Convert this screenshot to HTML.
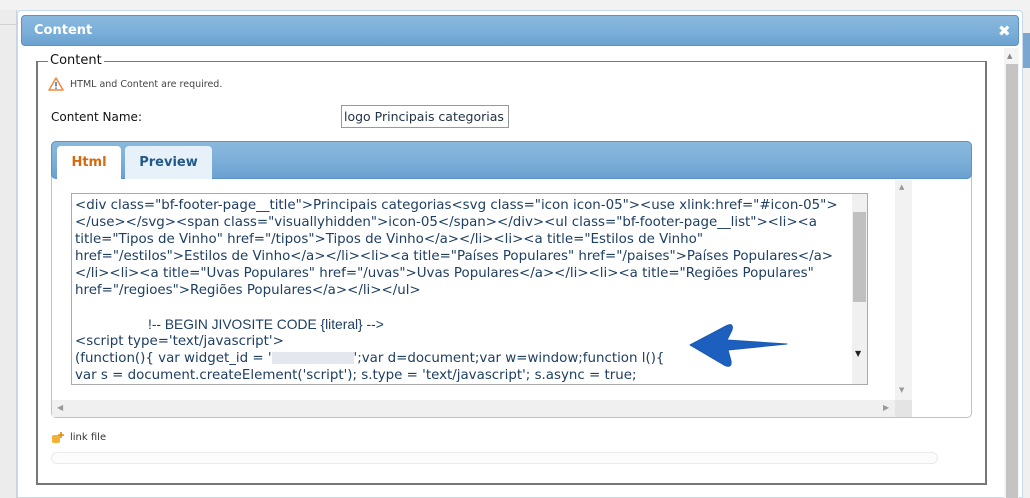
<!DOCTYPE html>
<html><head><meta charset="utf-8"><style>
*{box-sizing:border-box;margin:0;padding:0}
body{width:1030px;height:498px;overflow:hidden;background:#f2f2f2;font-family:"DejaVu Sans","Liberation Sans",sans-serif;position:relative}
.abs{position:absolute}
</style></head><body>
<div class="abs" style="left:0;top:10px;width:17px;height:488px;background:#ececec;border-right:1px solid #c8d4e0"></div>
<div class="abs" style="left:0;top:24px;width:17px;height:1px;background:#d0d0d0"></div>
<div class="abs" style="left:1019px;top:10px;width:11px;height:488px;background:#f0f0f0"></div>
<div class="abs" style="left:1022px;top:33px;width:8px;height:35px;background:#7aa6d0"></div>
<!-- dialog -->
<div class="abs" style="left:17px;top:10px;width:1006px;height:488px;background:#fff;border:1px solid #c6daee;border-radius:4px 4px 0 0"></div>
<div class="abs" style="left:21px;top:15px;width:998px;height:31px;border-radius:4px;border:1px solid #5b93c8;background:linear-gradient(#8ab8dd,#7aaed8 60%,#6ba1d0)"></div>
<div class="abs" style="left:34px;top:23px;color:#fff;font-weight:bold;font-size:13px;font-family:'DejaVu Sans',sans-serif">Content</div>
<div class="abs" style="left:998px;top:22px;color:#fff;font-weight:bold;font-size:15px">✖</div>
<!-- dialog scrollbar -->
<div class="abs" style="left:1004px;top:48px;width:15px;height:450px;background:#f4f4f4"></div>
<div class="abs" style="left:1006px;top:64px;width:12px;height:434px;background:#c4c4c4"></div>
<div class="abs" style="left:1007px;top:52px;font-size:7px;color:#888">▲</div>
<!-- fieldset -->
<div class="abs" style="left:36px;top:61px;width:951px;height:424px;border:2px solid #777;border-top-width:1px"></div>
<div class="abs" style="left:48px;top:53px;background:#fff;padding:0 2px;font-size:13px;color:#111">Content</div>
<svg class="abs" style="left:48px;top:77px" width="16" height="14" viewBox="0 0 16 14"><path d="M8 1 L15 13 H1 Z" fill="#fff" stroke="#f08a3c" stroke-width="1.5" stroke-linejoin="round"/><rect x="7.3" y="5" width="1.4" height="4.5" fill="#3a5fa0"/><rect x="7.3" y="10.5" width="1.4" height="1.4" fill="#3a5fa0"/></svg>
<div class="abs" style="left:70px;top:79px;font-size:9.5px;color:#444">HTML and Content are required.</div>
<div class="abs" style="left:51px;top:110px;font-size:12px;color:#111">Content Name:</div>
<div class="abs" style="left:341px;top:105px;width:168px;height:23px;border:1px solid #999;font-size:12.5px;color:#234;padding:3px 0 0 2px;white-space:nowrap">logo Principais categorias</div>
<!-- tabs container -->
<div class="abs" style="left:51px;top:141px;width:921px;height:277px;border:1px solid #a9c6e2;border-radius:5px;background:#fff"></div>
<div class="abs" style="left:51px;top:141px;width:921px;height:38px;border:1px solid #5b93c8;border-radius:5px;background:linear-gradient(#8ab8dd,#7aaed8 60%,#6aa0d0)"></div>
<div class="abs" style="left:57px;top:146px;width:64px;height:33px;background:#fff;border-radius:4px 4px 0 0;color:#d46a10;font-weight:bold;font-size:13px;text-align:center;padding-top:9px">Html</div>
<div class="abs" style="left:125px;top:146px;width:87px;height:33px;background:#e6f1fa;border-radius:4px 4px 0 0;color:#245888;font-weight:bold;font-size:13px;text-align:center;padding-top:9px">Preview</div>
<!-- outer scrollbars -->
<div class="abs" style="left:895px;top:180px;width:17px;height:220px;background:#f2f2f2"></div>
<div class="abs" style="left:899px;top:183px;font-size:7px;color:#999">▲</div>
<div class="abs" style="left:899px;top:386px;font-size:7px;color:#999">▼</div>
<div class="abs" style="left:52px;top:400px;width:843px;height:17px;background:#f0f0f0"></div>
<div class="abs" style="left:895px;top:400px;width:17px;height:17px;background:#e4e4e4"></div>
<div class="abs" style="left:57px;top:403px;font-size:8px;color:#999">◀</div>
<div class="abs" style="left:883px;top:403px;font-size:8px;color:#999">▶</div>
<!-- textarea -->
<div class="abs" style="left:71px;top:193px;width:797px;height:192px;border:1px solid #aaa;background:#fff;overflow:hidden">
<div style="padding:3px 0 0 3px;font-size:13.4px;line-height:17px;color:#1e3e62;white-space:nowrap">
<div>&lt;div class="bf-footer-page__title"&gt;Principais categorias&lt;svg class="icon icon-05"&gt;&lt;use xlink:href="#icon-05"&gt;</div>
<div>&lt;/use&gt;&lt;/svg&gt;&lt;span class="visuallyhidden"&gt;icon-05&lt;/span&gt;&lt;/div&gt;&lt;ul class="bf-footer-page__list"&gt;&lt;li&gt;&lt;a</div>
<div>title="Tipos de Vinho" href="/tipos"&gt;Tipos de Vinho&lt;/a&gt;&lt;/li&gt;&lt;li&gt;&lt;a title="Estilos de Vinho"</div>
<div>href="/estilos"&gt;Estilos de Vinho&lt;/a&gt;&lt;/li&gt;&lt;li&gt;&lt;a title="Países Populares" href="/paises"&gt;Países Populares&lt;/a&gt;</div>
<div>&lt;/li&gt;&lt;li&gt;&lt;a title="Uvas Populares" href="/uvas"&gt;Uvas Populares&lt;/a&gt;&lt;/li&gt;&lt;li&gt;&lt;a title="Regiões Populares"</div>
<div>href="/regioes"&gt;Regiões Populares&lt;/a&gt;&lt;/li&gt;&lt;/ul&gt;</div>
<div>&nbsp;</div>
<div style="padding-left:73px;font-family:'Liberation Sans',sans-serif;font-size:13.8px">!-- BEGIN JIVOSITE CODE {literal} --&gt;</div>
<div>&lt;script type='text/javascript'&gt;</div>
<div>(function(){ var widget_id = '<span style="display:inline-block;width:82px;height:12px;background:#e4e8ee;vertical-align:middle"></span>';var d=document;var w=window;function l(){</div>
<div>var s = document.createElement('script'); s.type = 'text/javascript'; s.async = true;</div>
</div>
<div class="abs" style="left:780px;top:0;width:16px;height:190px;background:#f0f0f0"></div>
<div class="abs" style="left:781px;top:18px;width:13px;height:90px;background:#c0c0c0"></div>
<div class="abs" style="left:783px;top:155px;font-size:8px;color:#222">▼</div>
</div>
<!-- arrow -->
<svg class="abs" style="left:686px;top:320px" width="105" height="52" viewBox="0 0 105 52"><path d="M4 25 L40 6 Q48 2 46 10 L41 20 L101 24 L42 30 L45 41 Q46 49 38 45 Z" fill="#1c5fbf" stroke="#1a58b2" stroke-width="1" stroke-linejoin="round"/></svg>
<!-- link file -->
<svg class="abs" style="left:51px;top:431px" width="14" height="14" viewBox="0 0 14 14"><rect x="1" y="4" width="8" height="8" rx="2" fill="#f2b234"/><path d="M10 1v6M7 4h6" stroke="#e08a10" stroke-width="1.6"/></svg>
<div class="abs" style="left:70px;top:432px;font-size:10px;color:#333">link file</div>
<div class="abs" style="left:51px;top:452px;width:887px;height:12px;border:1px solid #eaeaea;border-radius:6px;background:#fcfcfc"></div>
</body></html>
